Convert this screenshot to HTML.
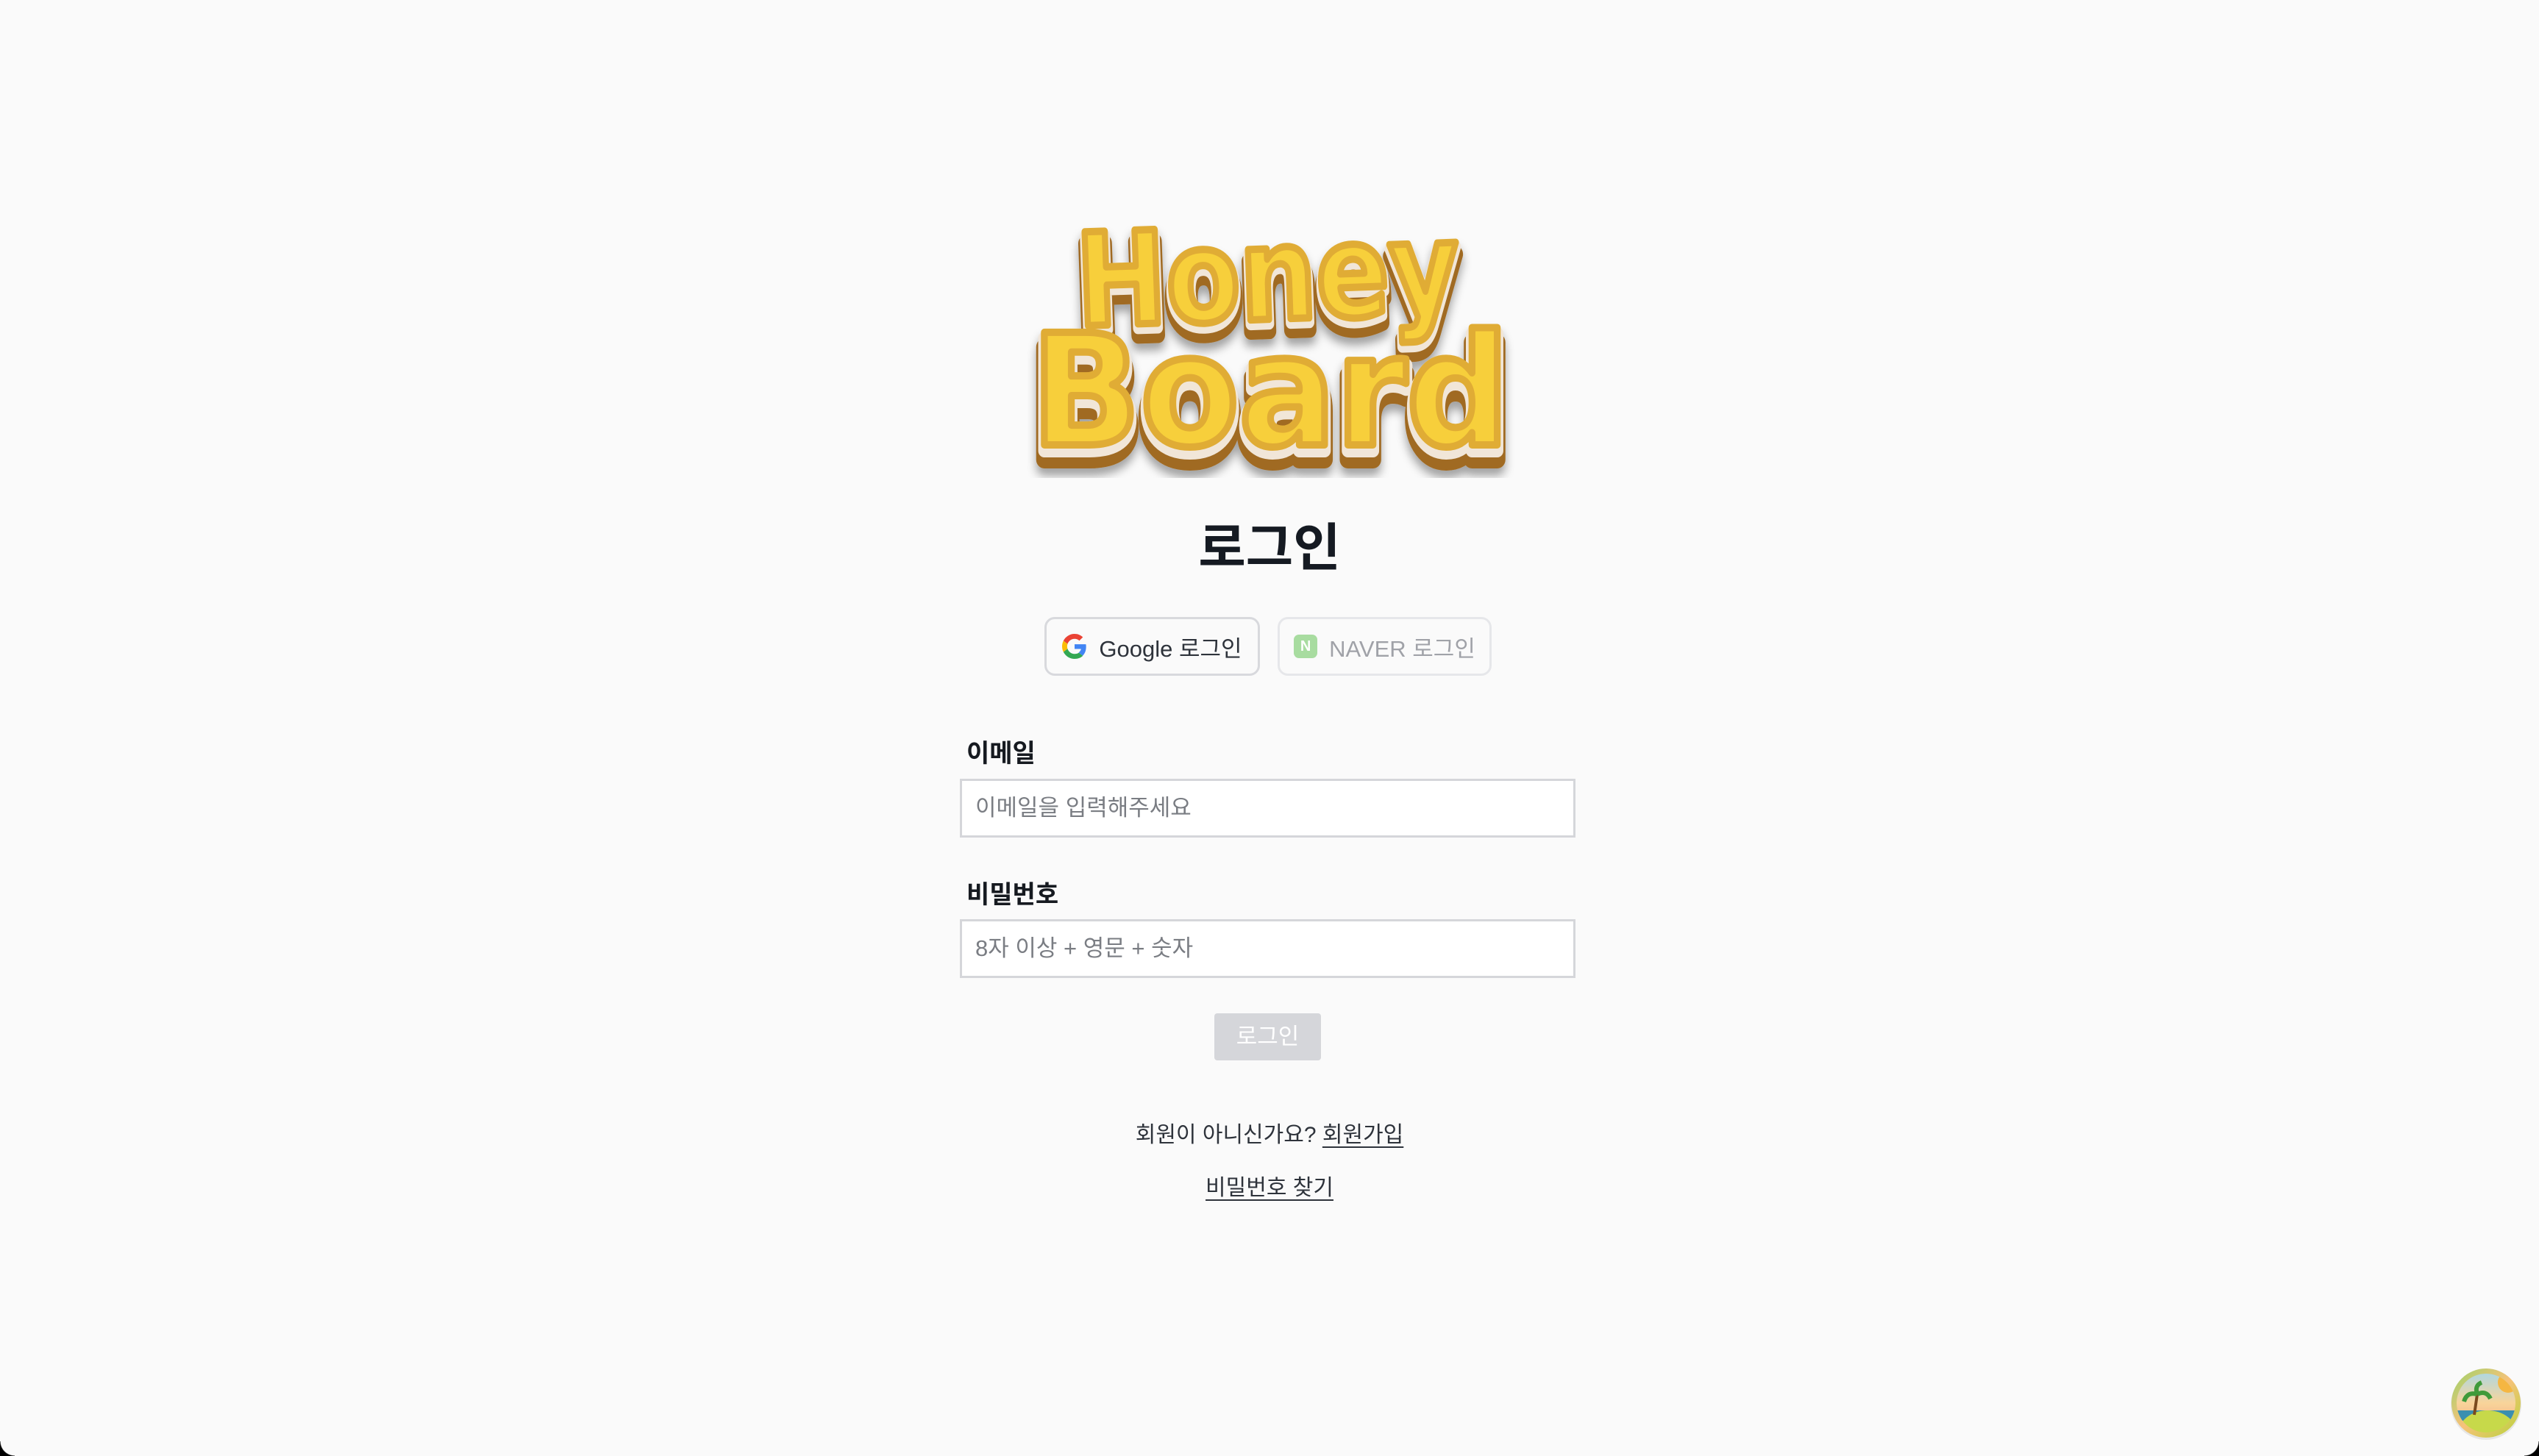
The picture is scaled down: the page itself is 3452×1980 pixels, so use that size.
<!DOCTYPE html>
<html><head><meta charset="utf-8">
<style>
html,body{margin:0;padding:0;}
body{width:3452px;height:1980px;background:#fafafa;position:relative;overflow:hidden;font-family:"Liberation Sans","Noto Sans CJK KR",sans-serif;color:#1f2328;}
.abs{position:absolute;}
.title{left:0;width:3452px;top:700px;text-align:center;font-size:70px;font-weight:700;color:#151a22;line-height:90px;}
.btn{top:839px;height:80px;border-radius:14px;box-sizing:border-box;background:#fafafa;font-size:31px;display:flex;align-items:center;justify-content:center;gap:16px;}
.g{left:1420px;width:293px;border:3px solid #d8d9dd;color:#2e333b;}
.n{left:1737px;width:291px;border:3px solid #e6e7ea;color:#a0a2a8;}
.lbl{left:1314px;font-size:34px;font-weight:700;color:#161a20;}
.inp{left:1305px;width:837px;height:80px;box-sizing:border-box;border:3px solid #d5d6da;background:#fff;font-size:31px;color:#7a7d83;padding-left:18px;line-height:74px;}
.lg{left:1651px;top:1378px;width:145px;height:64px;background:#d5d6da;border-radius:4px;color:#fff;font-size:31px;text-align:center;line-height:64px;}
.ln{left:0;width:3452px;text-align:center;font-size:30px;color:#2e333b;}
u{text-underline-offset:6px;text-decoration-thickness:2px;}
</style></head><body>
<svg class="abs" style="left:1380px;top:290px" width="700" height="360" viewBox="0 0 700 360">
<defs>
<filter id="sh" x="-10%" y="-10%" width="120%" height="130%"><feDropShadow dx="0" dy="10" stdDeviation="6" flood-color="#000" flood-opacity="0.35"/></filter>
</defs>
<g font-family="DejaVu Sans" font-weight="bold" filter="url(#sh)">
<g transform="rotate(-2 350 100)">
<text x="84" y="160" font-size="175" textLength="520" lengthAdjust="spacingAndGlyphs" fill="#a06a24" stroke="#a06a24" stroke-width="22" stroke-linejoin="round">Honey</text>
<text x="84" y="150" font-size="175" textLength="520" lengthAdjust="spacingAndGlyphs" fill="#f4efe8" stroke="#f1e6d8" stroke-width="16" stroke-linejoin="round">Honey</text>
<text x="84" y="144" font-size="175" textLength="520" lengthAdjust="spacingAndGlyphs" fill="#f7cf3a" stroke="#e0ac35" stroke-width="10" stroke-linejoin="round">Honey</text>
</g>
<text x="22" y="335" font-size="210" textLength="650" lengthAdjust="spacingAndGlyphs" fill="#a06a24" stroke="#a06a24" stroke-width="24" stroke-linejoin="round">Board</text>
<text x="22" y="323" font-size="210" textLength="650" lengthAdjust="spacingAndGlyphs" fill="#f4efe8" stroke="#f1e6d8" stroke-width="18" stroke-linejoin="round">Board</text>
<text x="22" y="315" font-size="210" textLength="650" lengthAdjust="spacingAndGlyphs" fill="#f7cf3a" stroke="#e0ac35" stroke-width="10" stroke-linejoin="round">Board</text>
</g>
</svg>
<div class="abs title">로그인</div>
<div class="abs btn g"><svg width="34" height="34" viewBox="0 0 48 48"><path fill="#EA4335" d="M24 9.5c3.5 0 6.6 1.2 9.1 3.6l6.8-6.8C35.8 2.4 30.3 0 24 0 14.6 0 6.6 5.4 2.6 13.2l7.9 6.2C12.4 13.7 17.7 9.5 24 9.5z"/><path fill="#4285F4" d="M46.1 24.5c0-1.6-.1-3.1-.4-4.5H24v9h12.4c-.5 2.9-2.2 5.3-4.6 6.9l7.7 6c4.5-4.2 6.6-10.3 6.6-17.4z"/><path fill="#FBBC05" d="M10.5 28.6c-.5-1.4-.8-3-.8-4.6s.3-3.2.8-4.6l-7.9-6.2C.9 16.5 0 20.1 0 24s.9 7.5 2.6 10.8l7.9-6.2z"/><path fill="#34A853" d="M24 48c6.5 0 11.9-2.1 15.9-5.8l-7.7-6c-2.2 1.5-5 2.3-8.2 2.3-6.3 0-11.6-4.2-13.5-9.9l-7.9 6.2C6.6 42.6 14.6 48 24 48z"/></svg>Google 로그인</div>
<div class="abs btn n"><span style="display:inline-block;width:32px;height:32px;border-radius:7px;background:#a8dca0;color:#fff;font-size:20px;font-weight:700;text-align:center;line-height:32px;">N</span>NAVER 로그인</div>
<div class="abs lbl" style="top:997px">이메일</div>
<div class="abs inp" style="top:1059px">이메일을 입력해주세요</div>
<div class="abs lbl" style="top:1189px">비밀번호</div>
<div class="abs inp" style="top:1250px">8자 이상 + 영문 + 숫자</div>
<div class="abs lg">로그인</div>
<div class="abs ln" style="top:1518px">회원이 아니신가요? <u>회원가입</u></div>
<div class="abs ln" style="top:1590px"><u>비밀번호 찾기</u></div>
<svg class="abs" style="left:3330px;top:1858px" width="100" height="100" viewBox="0 0 100 100">
<defs>
<linearGradient id="ring" x1="0" y1="0" x2="1" y2="1"><stop offset="0" stop-color="#9bd36a"/><stop offset="0.5" stop-color="#f7c27a"/><stop offset="1" stop-color="#b6d43a"/></linearGradient>
<linearGradient id="sky" x1="0" y1="0" x2="0" y2="1"><stop offset="0" stop-color="#9fd8f0"/><stop offset="0.5" stop-color="#f8d49a"/><stop offset="1" stop-color="#f39a7a"/></linearGradient>
<clipPath id="c"><circle cx="50" cy="50" r="40"/></clipPath>
</defs>
<circle cx="50" cy="52" r="48" fill="#000" opacity="0.08"/>
<circle cx="50" cy="50" r="47" fill="url(#ring)"/>
<g clip-path="url(#c)">
<rect width="100" height="100" fill="url(#sky)"/>
<circle cx="80" cy="22" r="14" fill="#f5b642"/>
<rect x="0" y="60" width="100" height="14" fill="#3a8fb0"/>
<ellipse cx="52" cy="92" rx="40" ry="32" fill="#c7d94a"/>
<path d="M34 66 L38 38" stroke="#7a4a1e" stroke-width="4"/>
<path d="M38 38 q-14 -4 -18 10 M38 38 q12 -6 18 6 M38 38 q-4 -12 6 -16" stroke="#3f9a3a" stroke-width="6" fill="none"/>
</g>
</svg>
<div class="abs" style="right:0;bottom:0;width:20px;height:20px;background:radial-gradient(circle at 0 0,transparent 19px,#000 20px)"></div>
<div class="abs" style="left:0;bottom:0;width:20px;height:20px;background:radial-gradient(circle at 20px 0,transparent 19px,#000 20px)"></div>
</body></html>
